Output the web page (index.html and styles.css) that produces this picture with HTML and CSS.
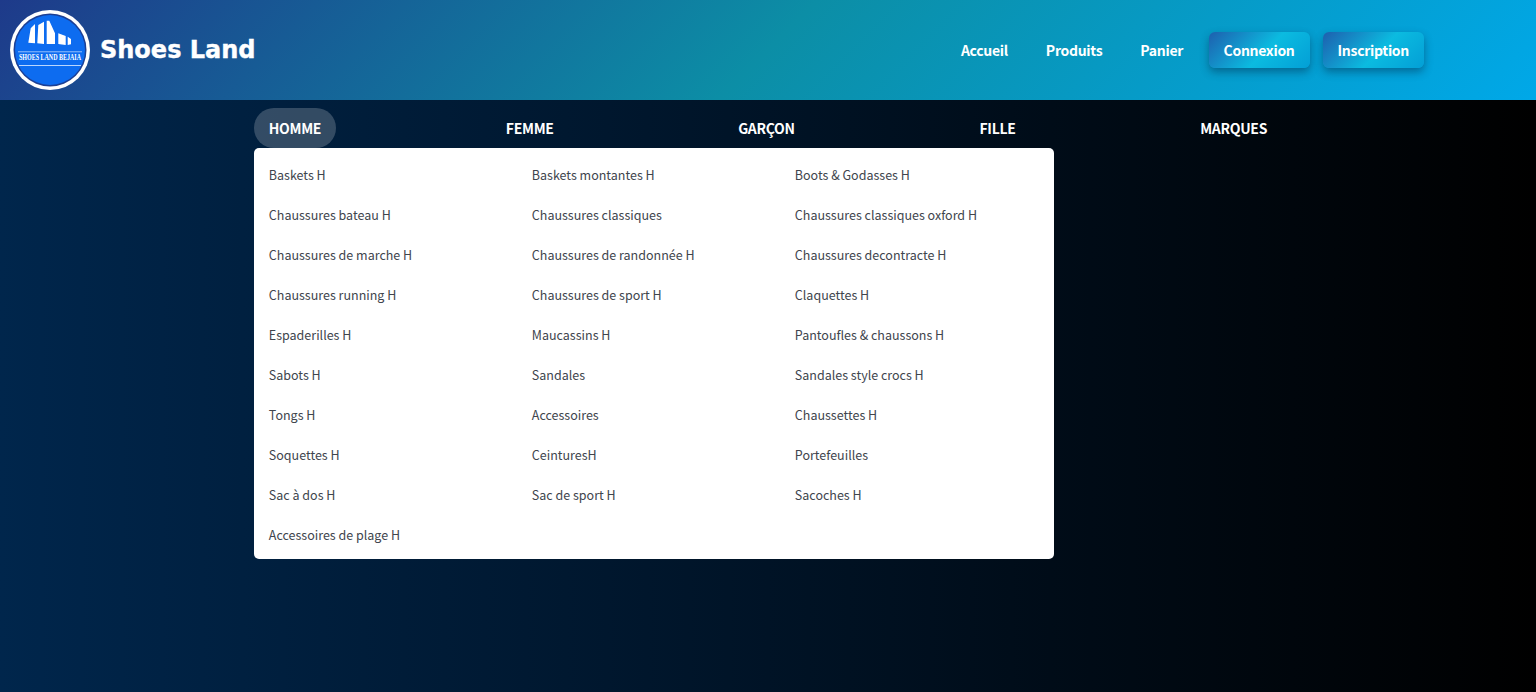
FILE: index.html
```html
<!DOCTYPE html>
<html lang="fr">
<head>
<meta charset="utf-8">
<title>Shoes Land</title>
<link rel="stylesheet" href="styles.css">
</head>
<body>
<header class="topbar">
  <a class="brand" href="#">
    <svg class="logo" viewBox="0 0 80 80" width="80" height="80" aria-hidden="true">
      <circle cx="40" cy="40" r="40" fill="#fff"/>
      <circle cx="40" cy="40" r="36.5" fill="#1c3f94"/>
      <circle cx="40" cy="40" r="35" fill="#0d6cf0"/>
      <path fill="#fff" d="M18.3 32.7 L20.7 18.3 L25 14 L25 33.3 Z M27.3 33.3 L28.3 15 L34 11.7 L34 34 Z M36.7 34 L36.7 10.7 L39.3 10.7 L45 23.3 L45 34 Z M48.3 34 L48.3 23.3 L55.7 26 L55.7 35 Z M57.7 35 L57.7 26.7 L61 29 L61 34.3 Z"/>
      <rect x="8" y="41.5" width="64" height=".7" fill="#cfe2ff"/>
      <g transform="translate(40 50) scale(.8 1)">
        <text class="logo-text" text-anchor="middle">SHOES LAND BEJAIA</text>
      </g>
      <rect x="9" y="55" width="62" height=".9" fill="#cfe2ff"/>
    </svg>
    <span class="brand-name">Shoes Land</span>
  </a>
  <nav class="main-nav">
    <a class="nav-link" href="#">Accueil</a>
    <a class="nav-link" href="#">Produits</a>
    <a class="nav-link" href="#">Panier</a>
    <a class="nav-btn" href="#">Connexion</a>
    <a class="nav-btn" href="#">Inscription</a>
  </nav>
</header>
<nav class="cats">
  <div class="cat cat-open">
    <a class="cat-link" href="#">HOMME</a>
    <div class="dropdown">
      <a href="#">Baskets H</a><a href="#">Baskets montantes H</a><a href="#">Boots &amp; Godasses H</a>
      <a href="#">Chaussures bateau H</a><a href="#">Chaussures classiques</a><a href="#">Chaussures classiques oxford H</a>
      <a href="#">Chaussures de marche H</a><a href="#">Chaussures de randonnée H</a><a href="#">Chaussures decontracte H</a>
      <a href="#">Chaussures running H</a><a href="#">Chaussures de sport H</a><a href="#">Claquettes H</a>
      <a href="#">Espaderilles H</a><a href="#">Maucassins H</a><a href="#">Pantoufles &amp; chaussons H</a>
      <a href="#">Sabots H</a><a href="#">Sandales</a><a href="#">Sandales style crocs H</a>
      <a href="#">Tongs H</a><a href="#">Accessoires</a><a href="#">Chaussettes H</a>
      <a href="#">Soquettes H</a><a href="#">CeinturesH</a><a href="#">Portefeuilles</a>
      <a href="#">Sac à dos H</a><a href="#">Sac de sport H</a><a href="#">Sacoches H</a>
      <a href="#">Accessoires de plage H</a>
    </div>
  </div>
  <div class="cat"><a class="cat-link" href="#">FEMME</a></div>
  <div class="cat"><a class="cat-link" href="#">GARÇON</a></div>
  <div class="cat"><a class="cat-link" href="#">FILLE</a></div>
  <div class="cat"><a class="cat-link" href="#">MARQUES</a></div>
</nav>
</body>
</html>
```
FILE: styles.css
```css
* { box-sizing: border-box; }
html, body { height: 100%; }
body {
  margin: 0;
  min-height: 692px;
  overflow: hidden;
  background: linear-gradient(90deg, #00264c 0%, #000 100%);
  font-family: "Noto Sans CJK SC", "Noto Sans", sans-serif;
  color: #fff;
}
a { color: inherit; text-decoration: none; }

.topbar {
  height: 100px;
  display: flex;
  align-items: center;
  justify-content: space-between;
  padding: 0 112px 0 10px;
  background: linear-gradient(135deg, #1e3a8a 0%, #0c8ea6 50%, #00a8e8 100%);
}
.brand { display: flex; align-items: center; gap: 10px; }
.logo { display: block; }
.logo-text {
  font-family: "Liberation Serif", serif;
  font-size: 7.5px;
  font-weight: 700;
  fill: #fff;
}
.brand-name {
  font-family: "DejaVu Sans", sans-serif;
  font-size: 24px;
  font-weight: 700;
  line-height: 30px;
  color: #fff;
  -webkit-text-stroke: .4px #fff;
}
.main-nav { display: flex; align-items: center; gap: 13px; }
.nav-link {
  font-size: 14px;
  font-weight: 700;
  letter-spacing: -.3px;
  line-height: 36px;
  padding: 0 12.5px;
}
.nav-btn {
  font-size: 14px;
  font-weight: 700;
  letter-spacing: -.3px;
  line-height: 36px;
  height: 36px;
  padding: 0 15px;
  border-radius: 6px;
  background: linear-gradient(135deg, #1e5fae 0%, #0bbbe0 55%, #039fd6 100%);
  box-shadow: 0 4px 8px rgba(0, 40, 70, .45);
}

.cats {
  width: 1183px;
  margin: 8px auto 0;
  display: flex;
  justify-content: space-around;
}
.cat { position: relative; height: 40px; }
.cat-link {
  display: block;
  height: 40px;
  padding: 0 15px;
  border-radius: 20px;
  font-size: 14px;
  font-weight: 700;
  letter-spacing: -.3px;
  line-height: 41px;
}
.cat-open .cat-link { background: rgba(255, 255, 255, .2); }
.dropdown {
  position: absolute;
  top: 40px;
  left: 0;
  width: 800px;
  height: 411px;
  padding: 6px 0 5px 15px;
  display: grid;
  grid-template-columns: repeat(3, 263px);
  grid-auto-rows: 40px;
  align-items: center;
  background: #fff;
  border-radius: 5px;
  font-size: 12.5px;
  letter-spacing: 0;
  color: #40454d;
}
```
